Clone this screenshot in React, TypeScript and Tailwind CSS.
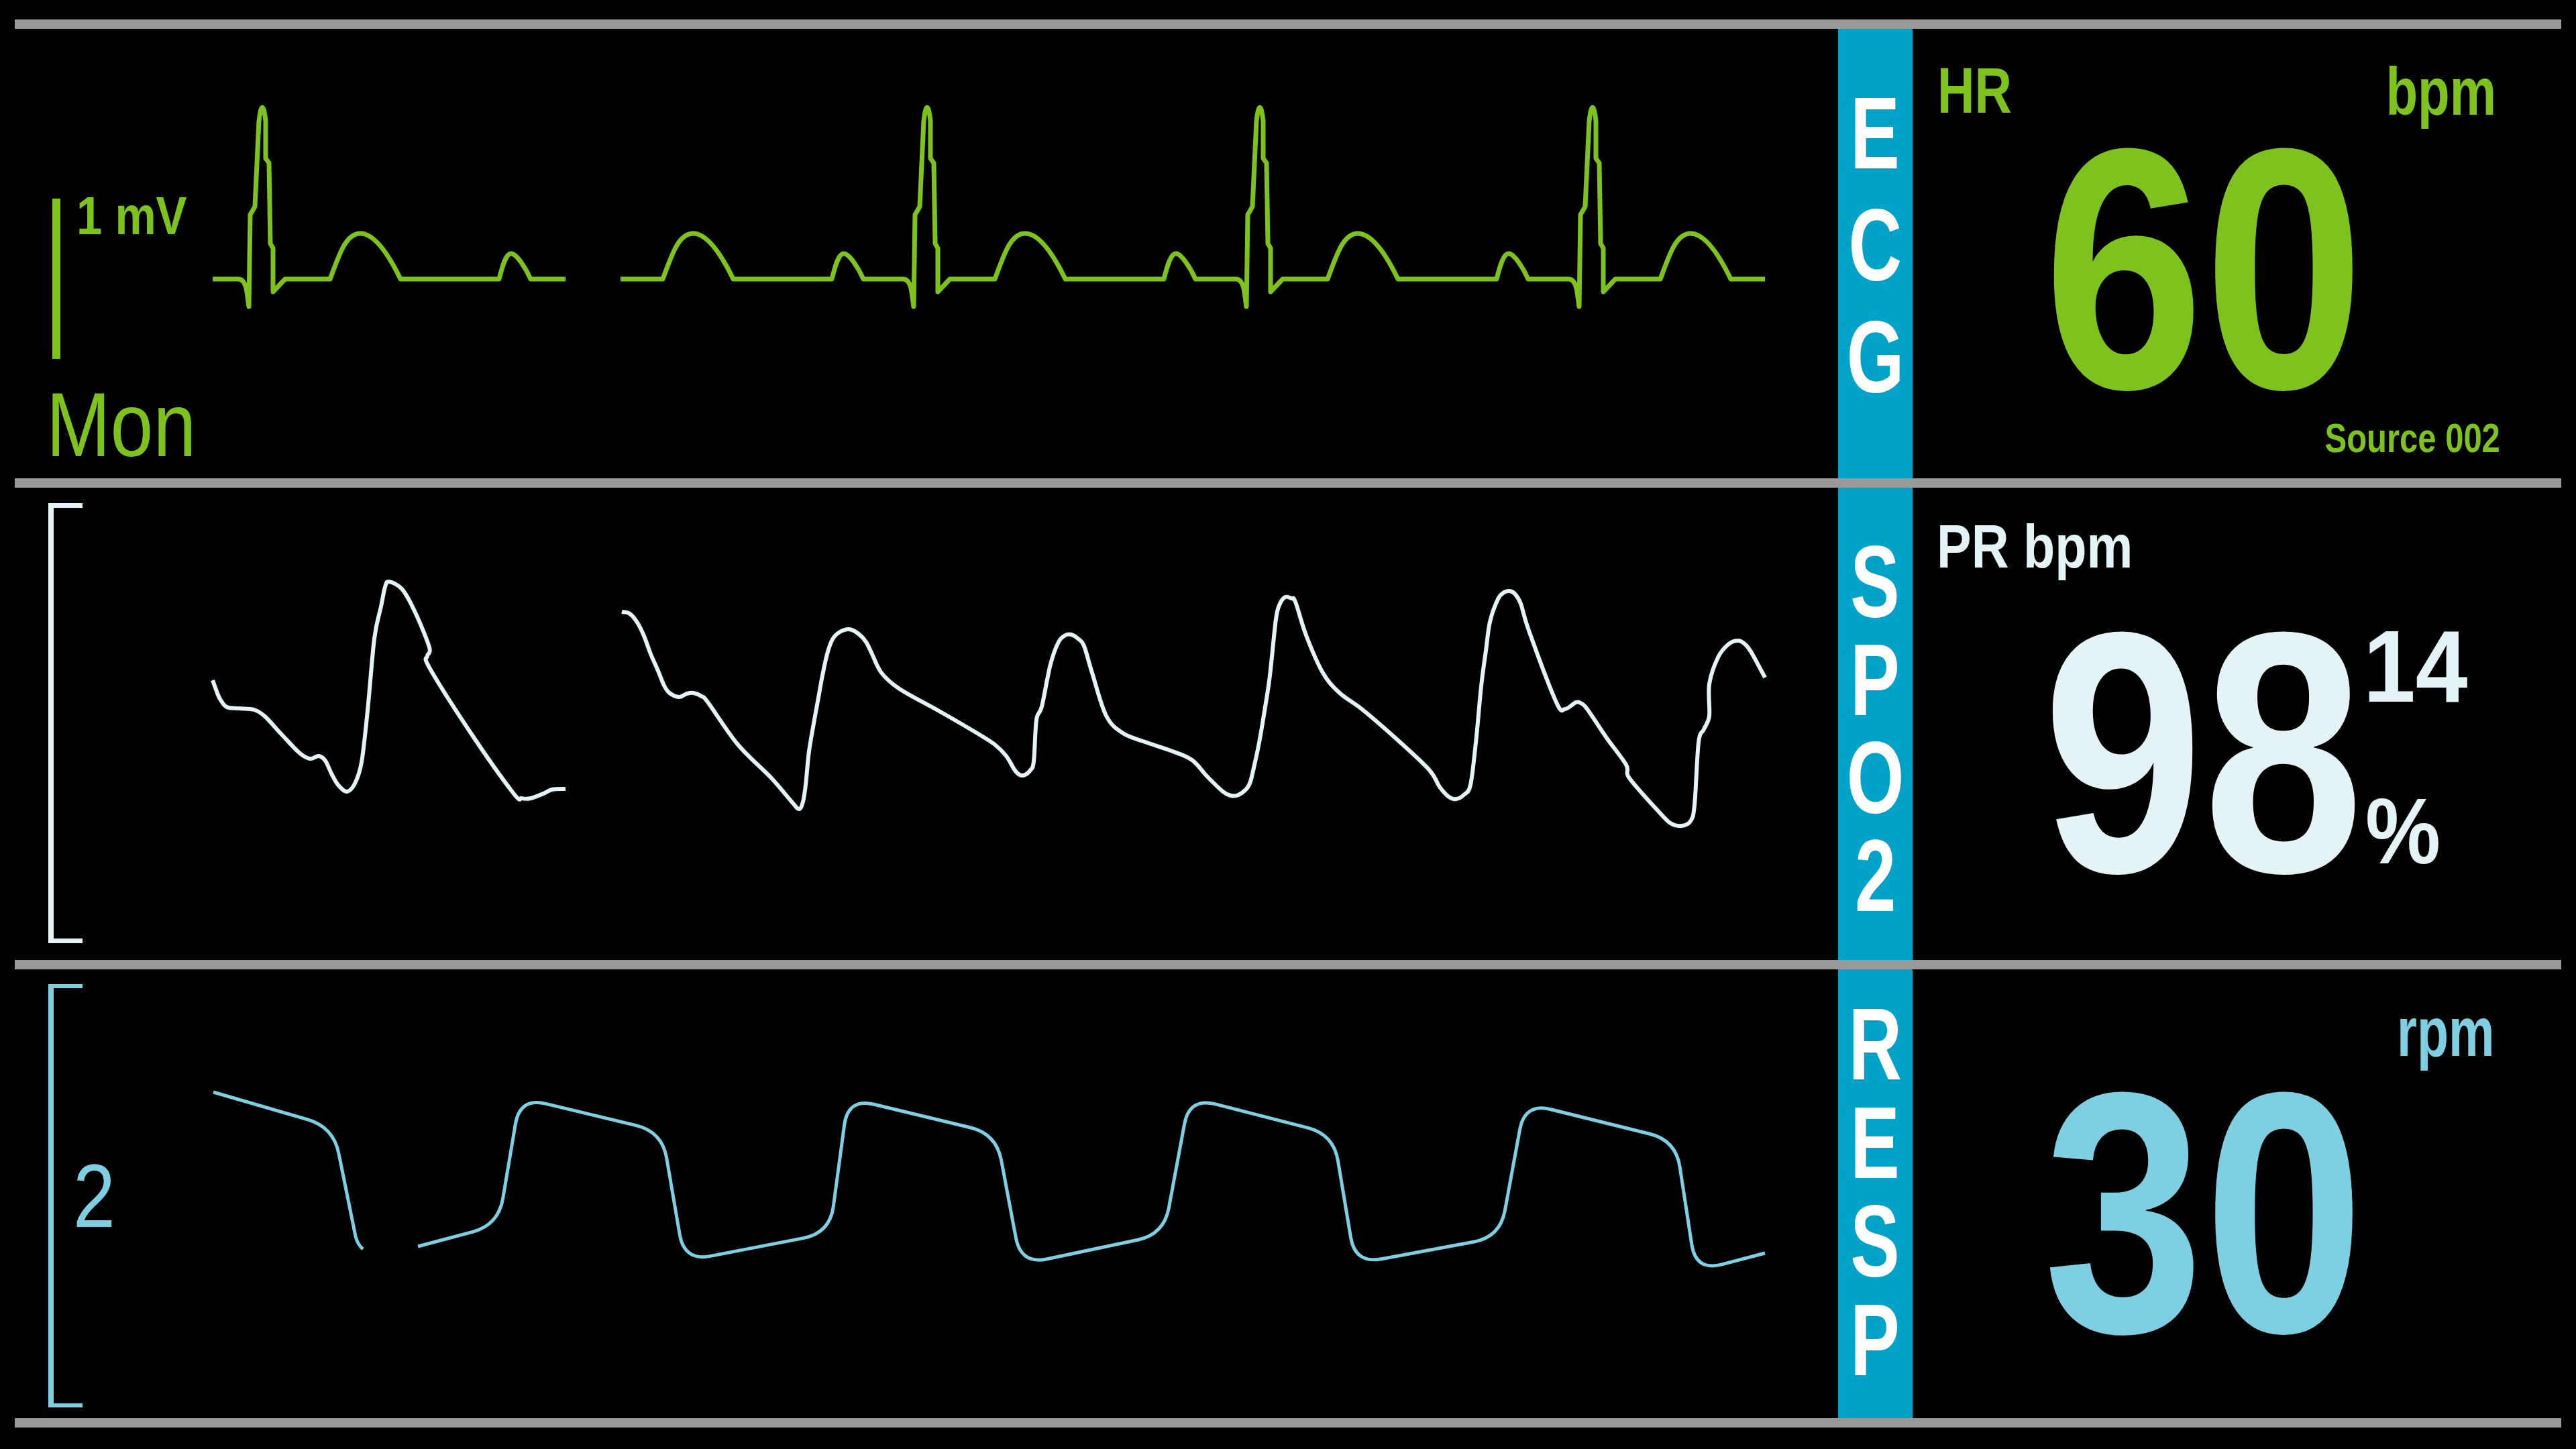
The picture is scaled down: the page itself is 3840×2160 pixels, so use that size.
import React from "react";

type Pt = [number, number];

function catmull(pts: Pt[]): string {
  let d = `M${pts[0][0]} ${pts[0][1]}`;
  for (let i = 0; i < pts.length - 1; i++) {
    const p0 = pts[i - 1] ?? pts[i];
    const p1 = pts[i];
    const p2 = pts[i + 1];
    const p3 = pts[i + 2] ?? p2;
    const c1x = p1[0] + (p2[0] - p0[0]) / 6;
    const c1y = p1[1] + (p2[1] - p0[1]) / 6;
    const c2x = p2[0] - (p3[0] - p1[0]) / 6;
    const c2y = p2[1] - (p3[1] - p1[1]) / 6;
    d += ` C${c1x.toFixed(1)} ${c1y.toFixed(1)} ${c2x.toFixed(1)} ${c2y.toFixed(1)} ${p2[0]} ${p2[1]}`;
  }
  return d;
}

function rounded(pts: Pt[], r: number): string {
  let d = `M${pts[0][0]} ${pts[0][1]}`;
  for (let i = 1; i < pts.length - 1; i++) {
    const [ax, ay] = pts[i - 1];
    const [px, py] = pts[i];
    const [bx, by] = pts[i + 1];
    const la = Math.hypot(ax - px, ay - py);
    const lb = Math.hypot(bx - px, by - py);
    const ra = Math.min(r, la / 2);
    const rb = Math.min(r, lb / 2);
    const x1 = px + ((ax - px) * ra) / la;
    const y1 = py + ((ay - py) * ra) / la;
    const x2 = px + ((bx - px) * rb) / lb;
    const y2 = py + ((by - py) * rb) / lb;
    d += ` L${x1.toFixed(1)} ${y1.toFixed(1)} Q${px} ${py} ${x2.toFixed(1)} ${y2.toFixed(1)}`;
  }
  const last = pts[pts.length - 1];
  d += ` L${last[0]} ${last[1]}`;
  return d;
}

function beat(R: number, withP: boolean): string {
  const B = 416;
  const p = (dx: number, y: number) => `${R + dx} ${y}`;
  const parts = [
    `L${p(-37, B)}`,
    `Q${p(-27, B)} ${p(-24, 435)}`,
    `L${p(-21, 457)}`,
    `L${p(-19, 320)}`,
    `L${p(-12, 308)}`,
    `L${p(-6, 180)}`,
    `Q${p(-1, 140)} ${p(4, 180)}`,
    `L${p(4, 236)}`,
    `L${p(9, 243)}`,
    `L${p(11, 363)}`,
    `L${p(15, 370)}`,
    `L${p(15, 435)}`,
    `L${p(33, B)}`,
    `L${p(100, B)}`,
    `C${p(112, 385)} ${p(122, 348)} ${p(145, 348)}`,
    `C${p(168, 348)} ${p(190, 385)} ${p(205, B)}`,
  ];
  if (withP) {
    parts.push(
      `L${p(352, B)}`,
      `C${p(357, 396)} ${p(362, 378)} ${p(370, 378)}`,
      `C${p(378, 378)} ${p(392, 400)} ${p(399, B)}`
    );
  }
  return parts.join(" ");
}

const ECG_D = `M317 416 ${beat(392, true)} ${beat(888, true)} ${beat(1383, true)} ${beat(1879, true)} ${beat(2375, false)} L2631 416`;

const SPO2_A: Pt[] = [
  [317, 1014], [322, 1028], [328, 1042], [338, 1054], [357, 1056], [379, 1058], [395, 1068],
  [420, 1095], [446, 1122], [462, 1131], [475, 1127], [485, 1134], [495, 1155], [504, 1170],
  [517, 1180], [529, 1168], [539, 1136], [548, 1059], [558, 952], [568, 904], [574, 875],
  [580, 867], [600, 879], [619, 913], [640, 965], [637, 978], [640, 995], [700, 1090],
  [765, 1182], [778, 1190], [791, 1190], [810, 1183], [823, 1177], [843, 1176],
];

const SPO2_B: Pt[] = [
  [927, 912], [939, 915], [950, 928], [960, 948], [970, 975], [981, 1000], [990, 1022], [998, 1033],
  [1012, 1039], [1024, 1034], [1034, 1033], [1046, 1038], [1056, 1048], [1100, 1110], [1150, 1160],
  [1180, 1195], [1191, 1206], [1197, 1195], [1201, 1170], [1206, 1120], [1214, 1073], [1220, 1040],
  [1226, 1007], [1233, 975], [1241, 953], [1252, 942], [1266, 938], [1280, 945], [1291, 957],
  [1300, 975], [1314, 1003], [1341, 1027], [1400, 1060], [1460, 1095], [1483, 1110], [1500, 1127],
  [1512, 1147], [1520, 1155], [1528, 1155], [1536, 1148], [1541, 1135], [1545, 1073], [1553, 1053],
  [1566, 990], [1578, 957], [1588, 947], [1597, 946], [1607, 952], [1616, 963], [1628, 1003],
  [1649, 1067], [1674, 1093], [1710, 1107], [1748, 1120], [1777, 1133], [1800, 1158], [1823, 1180],
  [1835, 1186], [1846, 1185], [1858, 1176], [1864, 1165], [1870, 1140], [1877, 1107], [1885, 1060],
  [1893, 1007], [1902, 923], [1908, 900], [1916, 890], [1925, 892], [1931, 897], [1947, 947],
  [1972, 1003], [1997, 1033], [2030, 1057], [2080, 1100], [2130, 1147], [2146, 1173], [2160, 1188],
  [2171, 1191], [2182, 1185], [2192, 1170], [2200, 1107], [2208, 1023], [2215, 970], [2221, 927],
  [2233, 893], [2242, 883], [2250, 881], [2258, 885], [2267, 900], [2279, 940], [2320, 1047],
  [2333, 1057], [2349, 1047], [2356, 1048], [2366, 1057], [2395, 1100], [2424, 1140], [2427, 1157],
  [2450, 1185], [2470, 1207], [2490, 1227], [2507, 1231], [2520, 1224], [2526, 1200], [2532, 1107],
  [2540, 1087], [2548, 1067], [2548, 1020], [2561, 980], [2577, 960], [2592, 955], [2603, 962],
  [2611, 973], [2631, 1010],
];

const RESP_A_D = `${rounded([[318, 1628], [497, 1680], [530, 1843]], 40)} Q533 1855 541 1862`;
const RESP_B_D = rounded(
  [
    [623, 1858], [743, 1826], [775, 1636], [987, 1687], [1020, 1880], [1237, 1838], [1264, 1637],
    [1485, 1690], [1522, 1885], [1735, 1840], [1773, 1636], [1988, 1691], [2020, 1884], [2236, 1844],
    [2273, 1644], [2498, 1700], [2528, 1895], [2631, 1868],
  ],
  40
);

const GREEN = "#7EC21E";

function GrayBar() {
  return <div className="h-[14px] bg-[#999999]" />;
}

function Strip({ letters, pt, gap }: { letters: string[]; pt: string; gap: string }) {
  return (
    <div className={`w-[111px] h-full bg-[#00A2C7] flex flex-col items-center ${pt} ${gap}`}>
      {letters.map((l, i) => (
        <div key={i} className="text-white font-bold text-[153px] leading-[113px] origin-center scale-x-[0.72]">
          {l}
        </div>
      ))}
    </div>
  );
}

function EcgRow() {
  return (
    <div className="flex h-[670px]">
      <div className="w-[295px] flex flex-col pl-[56px] pt-[249px]">
        <div className="flex items-start">
          <div className="w-[12px] h-[239px] mt-[4px] bg-[#7EC21E]" />
          <div className="ml-[24px] text-[80px] leading-[59px] font-bold text-[#7EC21E] whitespace-nowrap origin-left scale-x-[0.86]">
            1 mV
          </div>
        </div>
        <div className="mt-[49px] -ml-[9px] text-[135px] leading-[100px] text-[#7EC21E] whitespace-nowrap origin-left scale-x-[0.85]">
          Mon
        </div>
      </div>
      <div className="w-[2423px] h-full">
        <svg width="2423" height="670" viewBox="317 43 2423 670" className="overflow-visible">
          <defs>
            <clipPath id="ecgclip">
              <rect x="300" y="43" width="543" height="670" />
              <rect x="925" y="43" width="1800" height="670" />
            </clipPath>
          </defs>
          <path d={ECG_D} fill="none" stroke={GREEN} strokeWidth="7" strokeLinejoin="round" clipPath="url(#ecgclip)" />
        </svg>
      </div>
      <Strip letters={["E", "C", "G"]} pt="pt-[98px]" gap="gap-[54px]" />
      <div className="w-[967px] flex flex-col pt-[56px] pl-[37px] pr-[97px] text-[#7EC21E] font-bold">
        <div className="flex justify-between items-start">
          <div className="text-[96px] leading-[71px] whitespace-nowrap origin-left scale-x-[0.8]">HR</div>
          <div className="text-[100px] leading-[74px] whitespace-nowrap origin-right scale-x-[0.78]">bpm</div>
        </div>
        <div className="mt-[39px] ml-[158px] text-[512px] leading-[378px] whitespace-nowrap origin-left scale-x-[0.84]">60</div>
        <div className="mt-[40px] self-end -mr-[6px] text-[62px] leading-[46px] whitespace-nowrap origin-right scale-x-[0.79]">
          Source 002
        </div>
      </div>
    </div>
  );
}

function Spo2Row() {
  return (
    <div className="flex h-[704px]">
      <div className="w-[295px] pl-[50px] pt-[23px]">
        <div className="w-[51px] h-[656px] border-l-[8px] border-t-[7px] border-b-[7px] border-[#E4F3F6]" />
      </div>
      <div className="w-[2423px] h-full">
        <svg width="2423" height="704" viewBox="317 727 2423 704" className="overflow-visible">
          <path d={catmull(SPO2_A)} fill="none" stroke="#E4F3F6" strokeWidth="6" strokeLinejoin="round" />
          <path d={catmull(SPO2_B)} fill="none" stroke="#E4F3F6" strokeWidth="6" strokeLinejoin="round" />
        </svg>
      </div>
      <Strip letters={["S", "P", "O", "2"]} pt="pt-[83px]" gap="gap-[33px]" />
      <div className="w-[967px] flex flex-col pt-[55px] pl-[36px] text-[#E4F3F6] font-bold">
        <div className="text-[90px] leading-[67px] whitespace-nowrap origin-left scale-x-[0.86]">PR bpm</div>
        <div className="mt-[84px] ml-[158px] flex items-start">
          <div className="w-[478px]">
            <div className="text-[512px] leading-[378px] whitespace-nowrap origin-left scale-x-[0.84]">98</div>
          </div>
          <div className="mt-[4px] flex flex-col">
            <div className="text-[152px] leading-[112px] whitespace-nowrap origin-left scale-x-[0.92]">14</div>
            <div className="mt-[138px] ml-[3px] text-[140px] leading-[103px] whitespace-nowrap origin-left scale-x-[0.9]">%</div>
          </div>
        </div>
      </div>
    </div>
  );
}

function RespRow() {
  return (
    <div className="flex h-[669px]">
      <div className="w-[295px] pl-[50px] pt-[22px]">
        <div className="w-[51px] h-[631px] border-l-[8px] border-t-[6px] border-b-[6px] border-[#7ECFE2] flex items-center">
          <div className="ml-[29px] text-[133px] leading-[98px] text-[#7ECFE2] whitespace-nowrap origin-left scale-x-[0.85]">2</div>
        </div>
      </div>
      <div className="w-[2423px] h-full">
        <svg width="2423" height="669" viewBox="317 1445 2423 669" className="overflow-visible">
          <path d={RESP_A_D} fill="none" stroke="#7ECFE2" strokeWidth="5" strokeLinejoin="round" />
          <path d={RESP_B_D} fill="none" stroke="#7ECFE2" strokeWidth="5" strokeLinejoin="round" />
        </svg>
      </div>
      <Strip letters={["R", "E", "S", "P"]} pt="pt-[54px]" gap="gap-[34px]" />
      <div className="w-[967px] flex flex-col pt-[55px] pl-[37px] pr-[100px] text-[#7ECFE2] font-bold">
        <div className="self-end text-[104px] leading-[77px] whitespace-nowrap origin-right scale-x-[0.74]">rpm</div>
        <div className="mt-[42px] ml-[158px] text-[512px] leading-[378px] whitespace-nowrap origin-left scale-x-[0.84]">30</div>
      </div>
    </div>
  );
}

export default function App() {
  return (
    <div className="w-[3840px] h-[2160px] bg-black overflow-hidden pt-[29px] px-[22px] font-['Liberation_Sans',Arial,sans-serif]">
      <GrayBar />
      <EcgRow />
      <GrayBar />
      <Spo2Row />
      <GrayBar />
      <RespRow />
      <GrayBar />
    </div>
  );
}
